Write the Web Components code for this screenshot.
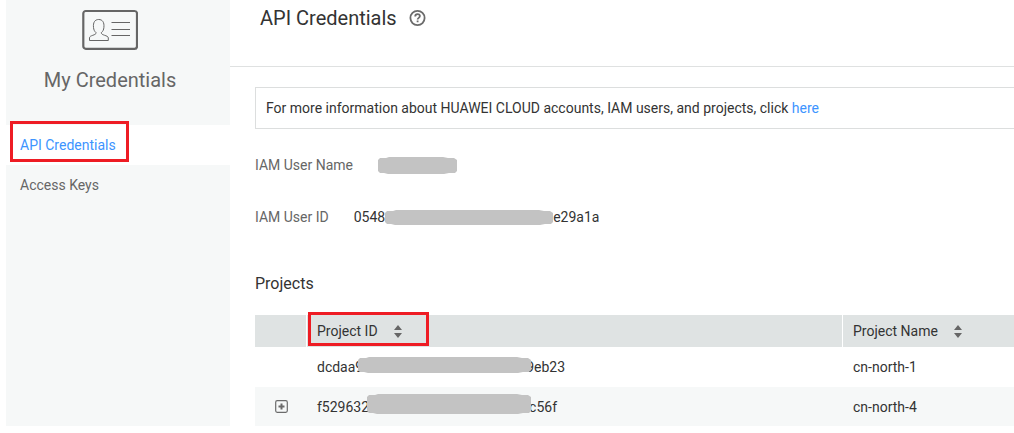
<!DOCTYPE html>
<html lang="en">
<head>
<meta charset="utf-8">
<title>My Credentials</title>
<style>
  body { margin: 0; background: #fff; color: #333; font: 14px/20px Roboto, "Liberation Sans", sans-serif; }
</style>
</head>
<body>
<app-shell>
  <side-nav slot="nav" heading="My Credentials">
    <nav-item href="#api" active>API Credentials</nav-item>
    <nav-item href="#keys">Access Keys</nav-item>
  </side-nav>
  <page-header>API Credentials</page-header>
  <page-content>
    <notice-bar>For more information about HUAWEI CLOUD accounts, IAM users, and projects, click <text-link href="#help">here</text-link></notice-bar>
    <detail-list></detail-list>
    <projects-table></projects-table>
  </page-content>
</app-shell>

<script>
const define = (name, html, setup) => {
  const template = document.createElement('template');
  template.innerHTML = html;
  customElements.define(name, class extends HTMLElement {
    constructor() {
      super();
      this.attachShadow({ mode: 'open' }).append(template.content.cloneNode(true));
    }
    connectedCallback() { if (setup) setup(this, this.shadowRoot); }
  });
};

define('app-shell', `
  <style>
    :host { display: grid; grid-template-columns: 224px minmax(0, 1fr); padding: 0 0 7px 6px; }
    main { min-width: 0; }
  </style>
  <slot name="nav"></slot>
  <main><slot></slot></main>`);

define('side-nav', `
  <style>
    :host { display: block; background: #f6f8f8; color: #666; }
    header { display: flex; flex-direction: column; align-items: center; gap: 18px; padding: 9px 0 33px; margin-right: 16px; }
    svg { display: block; }
    h2 { margin: 0; font-size: 20px; line-height: 24px; font-weight: 400; }
  </style>
  <header>
    <svg width="56" height="41" viewBox="0 0 56 41" fill="none" stroke="#666" aria-hidden="true">
      <rect x="1.300" y="2" width="53.700" height="37.800" rx="2.500" stroke-width="2.200"/>
      <path d="M7.500 31.500v-2.700c0-1.200 1.500-1.900 3.300-2.500 2-.7 3.300-1.200 3.300-2.600-1.700-1.400-2.400-3-2.600-5.300-.5-4.900 1.300-7.900 5.200-7.900s5.700 3 5.200 7.900c-.2 2.300-.9 3.900-2.600 5.300 0 1.400 1.300 1.900 3.300 2.600 1.800.6 3.700 1.300 3.700 2.500v2.700z"/>
      <path d="M29.500 13.500h18.500M29.500 20.500h18.500M29.500 26.500h18.500" stroke-width="1"/>
    </svg>
    <h2></h2>
  </header>
  <nav aria-label="Credentials"><slot></slot></nav>`,
  (host, root) => { root.querySelector('h2').textContent = host.getAttribute('heading'); });

define('nav-item', `
  <style>
    :host { display: block; position: relative; color: #666; }
    :host([active]) { background: #fff; color: #3d94ff; }
    a { display: block; padding: 10px 14px; color: inherit; text-decoration: none; }
    .mark { display: none; position: absolute; left: 4px; top: -4px; width: 119px; height: 41px; box-sizing: border-box; border: 3px solid #ee1c24; pointer-events: none; }
    :host([active]) .mark { display: block; }
  </style>
  <a><slot></slot></a><span class="mark"></span>`,
  (host, root) => { root.querySelector('a').href = host.getAttribute('href'); });

define('page-header', `
  <style>
    :host { display: flex; align-items: center; gap: 12px; padding: 6px 30px 36px; border-bottom: 1px solid #dfe1e1; }
    h1 { margin: 0; font-size: 20px; line-height: 24px; font-weight: 400; }
    button { display: block; padding: 0; border: 0; background: none; }
    svg { display: block; }
  </style>
  <h1><slot></slot></h1>
  <button type="button" aria-label="Help">
    <svg width="17" height="16" viewBox="0 0 17 16" fill="none" stroke="#6b6b6b" stroke-width="1.800">
      <circle cx="8.500" cy="8" r="7.100"/>
      <path d="M6.200 6.500c0-1.500 1-2.400 2.400-2.400s2.300.8 2.300 2c0 1.700-2.300 1.800-2.300 3.500M8.600 10.600v1.700"/>
    </svg>
  </button>`);

define('page-content', `
  <style>:host { display: block; padding: 20px 0 0 25px; }</style>
  <slot></slot>`);

define('notice-bar', `
  <style>:host { display: block; padding: 10px; border: 1px solid #dcdede; border-right: 0; }</style>
  <slot></slot>`);

define('text-link', `
  <style>a { color: #3d94ff; text-decoration: none; }</style>
  <a><slot></slot></a>`,
  (host, root) => { root.querySelector('a').href = host.getAttribute('href'); });

/* Grey marker stroke that hides part of a value. */
define('redaction-mark', `
  <style>
    :host { display: inline-block; position: relative; flex: none; vertical-align: middle; }
    svg { display: block; }
  </style>
  <svg fill="#c3c3c3" aria-hidden="true"><path/></svg>`,
  (host, root) => {
    const w = +host.getAttribute('width'), h = +host.getAttribute('height');
    const svg = root.querySelector('svg');
    svg.setAttribute('width', w);
    svg.setAttribute('height', h);
    svg.setAttribute('viewBox', `0 0 ${w} ${h}`);
    root.querySelector('path').setAttribute('d',
      `M0 3L2 1H8L11 0H${w - 14}L${w - 9} 1H${w - 3}L${w} 3V${h - 3}L${w - 2} ${h - 1}H${w - 8}L${w - 13} ${h}H10L6 ${h - 1}H2L0 ${h - 3}Z`);
  });

define('detail-list', `
  <style>
    :host { display: block; padding: 26px 0 47px; }
    dl { display: grid; gap: 32px; margin: 0; }
    div { display: flex; align-items: center; gap: 25px; height: 20px; }
    dt { color: #666; }
    dd { display: flex; align-items: center; margin: 0; }
  </style>
  <dl>
    <div><dt>IAM User Name</dt><dd><redaction-mark width="79" height="17"></redaction-mark></dd></div>
    <div><dt>IAM User ID</dt><dd>0548<redaction-mark width="168" height="15"></redaction-mark>e29a1a</dd></div>
  </dl>`);

define('sort-button', `
  <style>
    button { display: flex; align-items: center; gap: 16px; padding: 0; border: 0; background: none; color: inherit; font: inherit; }
    svg { display: block; }
  </style>
  <button type="button"><slot></slot>
    <svg width="8" height="13" viewBox="0 0 8 13" fill="#666" aria-hidden="true"><path d="M4 0L8 5H0zM4 13L0 8H8z"/></svg>
  </button>`);

define('projects-table', `
  <style>
    :host { display: block; }
    h3 { margin: 0 0 21px; font-size: 16px; line-height: 20px; font-weight: 400; }
    table { width: 100%; border-collapse: separate; border-spacing: 0; table-layout: fixed; }
    .toggle { width: 52px; }
    .name { width: 172px; }
    th, td { padding: 0 10px; text-align: left; font-weight: 400; box-sizing: border-box; }
    th { position: relative; height: 32px; background: #dfe3e3; }
    th:first-child { border-right: 1px solid #fff; }
    th:last-child { border-left: 1px solid #fff; }
    td { height: 40px; }
    td:nth-child(3) { padding-left: 11px; }
    tr.shaded td { height: 39px; background: #f6f8f8; }
    td > div { display: flex; align-items: center; height: 20px; }
    td button { display: block; margin-left: 10px; padding: 0; border: 0; background: none; }
    svg { display: block; }
    .mark { position: absolute; left: 1px; top: -3px; width: 121px; height: 34px; box-sizing: border-box; border: 3px solid #ee1c24; pointer-events: none; }
    .first { margin: 0 -5px 4px; }
    .second { margin: 0 -2px 6px; }
  </style>
  <h3>Projects</h3>
  <table>
    <colgroup><col class="toggle"><col><col class="name"></colgroup>
    <thead>
      <tr>
        <th></th>
        <th scope="col"><sort-button>Project ID</sort-button><span class="mark"></span></th>
        <th scope="col"><sort-button>Project Name</sort-button></th>
      </tr>
    </thead>
    <tbody>
      <tr>
        <td></td>
        <td><div>dcdaa9<redaction-mark class="first" width="173" height="16"></redaction-mark>9eb23</div></td>
        <td>cn-north-1</td>
      </tr>
      <tr class="shaded">
        <td><button type="button" aria-label="Expand project">
          <svg width="13" height="13" viewBox="0 0 13 13" fill="none" stroke="#6b6b6b"><rect x=".7" y=".7" width="11.600" height="11.600" rx="1.500" stroke-width="1.200"/><path d="M3.500 6.500h6M6.500 3.500v6" stroke-width="2"/></svg>
        </button></td>
        <td><div>f529632<redaction-mark class="second" width="164" height="20"></redaction-mark>c56f</div></td>
        <td>cn-north-4</td>
      </tr>
    </tbody>
  </table>`);
</script>
</body>
</html>
